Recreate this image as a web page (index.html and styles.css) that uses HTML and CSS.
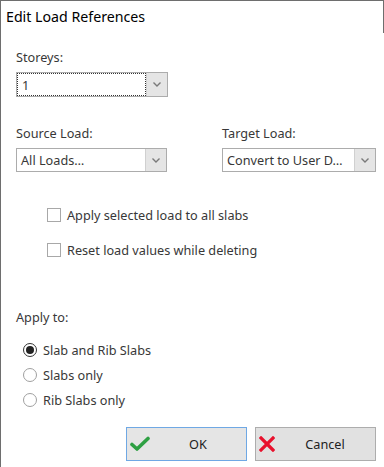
FILE: index.html
```html
<!DOCTYPE html>
<html lang="en">
<head>
  <meta charset="UTF-8" />
  <title>Edit Load References</title>
  <link rel="stylesheet" href="styles.css">
</head>
<body>
  <div class="dialog">
    <div class="titlebar">Edit Load References</div>

    <div class="body">
      <!-- Storeys -->
      <div class="field storeys">
        <div class="lbl">Storeys:</div>
        <div class="combo">
          <div class="value"><span class="focus-ring">1</span></div>
          <div class="arrow">
            <svg viewBox="0 0 8 5" width="8" height="5"><path d="M0.5 0.5 L4 4 L7.5 0.5" fill="none" stroke="#7a7a7a" stroke-width="1.4"/></svg>
          </div>
        </div>
      </div>

      <!-- Source / Target -->
      <div class="loads">
        <div class="field source">
          <div class="lbl">Source Load:</div>
          <div class="combo">
            <div class="value">All Loads…</div>
            <div class="arrow">
              <svg viewBox="0 0 8 5" width="8" height="5"><path d="M0.5 0.5 L4 4 L7.5 0.5" fill="none" stroke="#7a7a7a" stroke-width="1.4"/></svg>
            </div>
          </div>
        </div>
        <div class="field target">
          <div class="lbl">Target Load:</div>
          <div class="combo">
            <div class="value">Convert to User D…</div>
            <div class="arrow">
              <svg viewBox="0 0 8 5" width="8" height="5"><path d="M0.5 0.5 L4 4 L7.5 0.5" fill="none" stroke="#7a7a7a" stroke-width="1.4"/></svg>
            </div>
          </div>
        </div>
      </div>

      <!-- Options -->
      <div class="checks">
        <div class="check"><span class="box"></span>Apply selected load to all slabs</div>
        <div class="check"><span class="box"></span>Reset load values while deleting</div>
      </div>

      <!-- Apply to -->
      <div class="lbl apply-lbl">Apply to:</div>
      <div class="radios">
        <div class="radio"><span class="dot checked"></span>Slab and Rib Slabs</div>
        <div class="radio"><span class="dot"></span>Slabs only</div>
        <div class="radio"><span class="dot"></span>Rib Slabs only</div>
      </div>

      <!-- Buttons -->
      <div class="buttons">
        <div class="btn default">
          <svg class="icon" viewBox="0 0 20 16" width="20" height="16">
            <path d="M2 8.5 L7 13 L18 2.5" fill="none" stroke="#2ea043" stroke-width="3.6" stroke-linecap="round" stroke-linejoin="round"/>
          </svg>
          <span class="btn-text">OK</span>
        </div>
        <div class="btn">
          <svg class="icon" viewBox="0 0 16 16" width="16" height="16">
            <path d="M2 2 L14 14 M14 2 L2 14" fill="none" stroke="#e8112d" stroke-width="3.2" stroke-linecap="square"/>
          </svg>
          <span class="btn-text">Cancel</span>
        </div>
      </div>
    </div>
  </div>
</body>
</html>
```

FILE: styles.css
```css
* {
  box-sizing: border-box;
}
body {
  margin: 0;
  background: #fff;
  font-family: 'Noto Sans', 'Open Sans', sans-serif;
  font-size: 12.7px;
  color: #383838;
}
.dialog {
  width: 384px;
  height: 467px;
  border-top: 1px solid #6e6e6e;
  border-left: 1px solid #6e6e6e;
  overflow: hidden;
}
.titlebar {
  width: 383px;
  height: 32px;
  line-height: 32px;
  padding-left: 5px;
  border-right: 1px solid #6e6e6e;
  font-size: 14.2px;
  color: #000;
}
.body {
  padding-left: 15px;
}
.lbl {
  line-height: 16px;
}
.field .lbl {
  margin-bottom: 7px;
}
.storeys {
  margin-top: 16px;
}
/* Combo box */
.combo {
  display: flex;
  height: 25px;
  border: 1px solid #acacac;
  background: #fff;
}
.combo .value {
  flex: 1;
  display: flex;
  align-items: center;
  padding-left: 4px;
  white-space: nowrap;
  overflow: hidden;
}
.combo .arrow {
  width: 21px;
  display: flex;
  align-items: center;
  justify-content: center;
  background: #e5e5e5;
  border-left: 1px solid #d0d0d0;
}
.storeys .combo {
  width: 152px;
}
.storeys .value {
  padding: 0;
}
.focus-ring {
  display: flex;
  align-items: center;
  width: 100%;
  height: 23px;
  padding-left: 4px;
  border: 1px dotted #333;
}
.loads {
  display: flex;
  gap: 55px;
  margin-top: 28px;
}
.source .combo {
  width: 151px;
  height: 24px;
}
.target .combo {
  width: 154px;
  height: 24px;
}
/* Checkboxes */
.checks {
  margin-top: 35px;
  padding-left: 31px;
  display: flex;
  flex-direction: column;
  gap: 19px;
}
.check {
  display: flex;
  align-items: center;
  height: 16px;
  line-height: 16px;
}
.box {
  width: 14px;
  height: 14px;
  margin-right: 6px;
  border: 1px solid #a8a8a8;
  background: #fff;
}
/* Radios */
.apply-lbl {
  margin-top: 51px;
}
.radios {
  margin-top: 12px;
  padding-left: 7px;
}
.radio {
  display: flex;
  align-items: center;
  height: 25px;
}
.dot {
  width: 14px;
  height: 14px;
  margin-right: 6px;
  border: 1px solid #a0a0a0;
  border-radius: 50%;
  background: #fff;
  display: flex;
  align-items: center;
  justify-content: center;
}
.dot.checked {
  border-color: #333;
}
.dot.checked::after {
  content: '';
  width: 8px;
  height: 8px;
  border-radius: 50%;
  background: #222;
}
/* Buttons */
.buttons {
  display: flex;
  gap: 8px;
  margin-top: 15px;
  padding-left: 110px;
}
.btn {
  width: 121px;
  height: 34px;
  display: flex;
  align-items: center;
  padding-left: 3px;
  border: 1px solid #adadad;
  background: #e1e1e1;
  color: #222;
}
.btn.default {
  border: 1px solid #6fa8e4;
  background: #e5e5e5;
}
.btn .icon {
  flex: none;
}
.btn-text {
  flex: 1;
  text-align: center;
}
```
